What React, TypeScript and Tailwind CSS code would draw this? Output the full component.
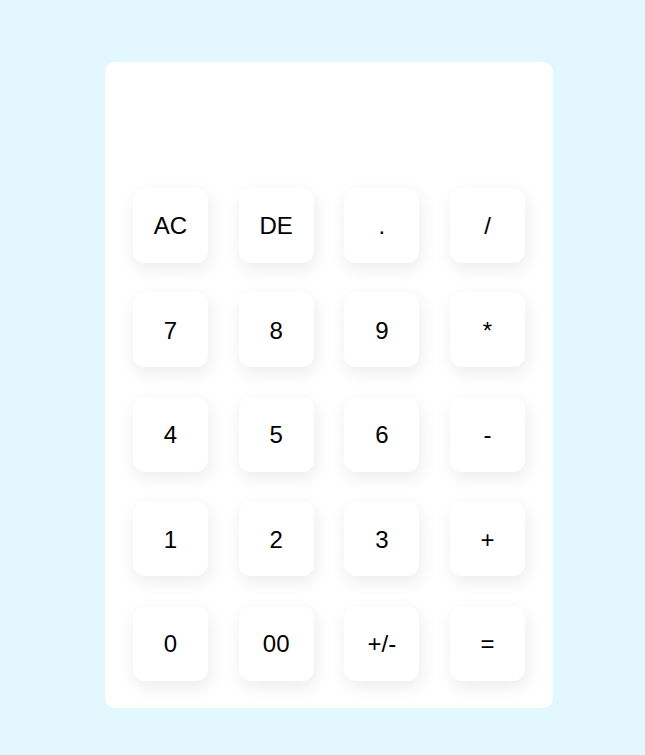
const keys = [
  "AC", "DE", ".", "/",
  "7", "8", "9", "*",
  "4", "5", "6", "-",
  "1", "2", "3", "+",
  "0", "00", "+/-", "=",
];

export default function App() {
  return (
    <div className="min-h-screen bg-[#e3f7fe] pt-[62px] pl-[105px] font-['Liberation_Sans',Arial,sans-serif]">
      <div className="w-[448px] h-[646px] bg-white rounded-[10px] px-[28px] pt-[28px]">
        <div className="h-[97.5px]" />
        <div className="grid grid-cols-[repeat(4,75px)] justify-between gap-y-[29.6px]">
          {keys.map((k) => (
            <button
              key={k}
              className="w-[75px] h-[75px] rounded-[12px] bg-white text-black text-[24px] pt-[2px] shadow-[2px_6px_18px_rgba(0,0,0,0.08)] flex items-center justify-center"
            >
              {k}
            </button>
          ))}
        </div>
      </div>
    </div>
  );
}
